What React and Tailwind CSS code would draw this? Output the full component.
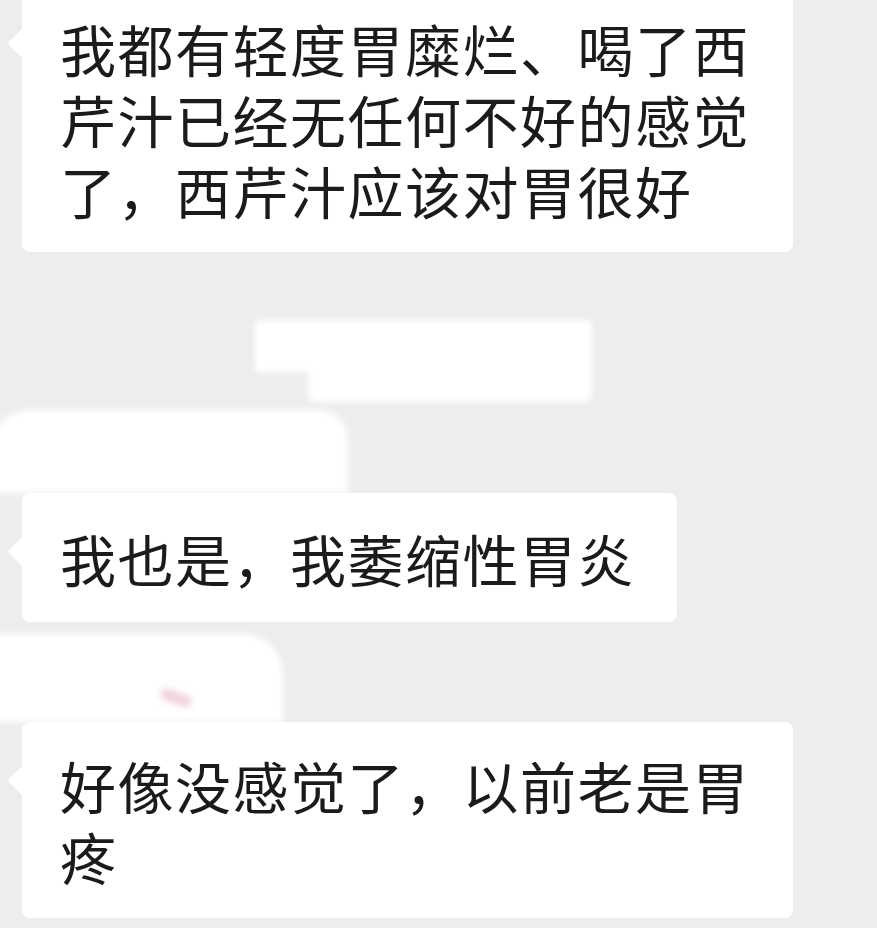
import React from 'react'

const Bubble = ({ children, className = '' }) => {
  return (
    <div className={`relative self-start ml-[22px] max-w-[771px] rounded-[8px] bg-white pl-[38px] pr-[42px] ${className}`}>
      <span className="absolute -left-[10px] top-[48px] h-[21px] w-[21px] rotate-45 rounded-[2px] bg-white"></span>
      <p className="relative text-[56px] leading-[71px] tracking-[1.5px] text-[#1b1b1b]">{children}</p>
    </div>
  )
}

// painted-over area between messages
const Redacted = () => {
  return (
    <div className="flex h-[241px] w-full flex-col pt-[68px] blur-[3px]">
      <div className="ml-[255px] h-[52px] w-[337px] rounded-t-[4px] bg-white"></div>
      <div className="ml-[308px] h-[30px] w-[284px] rounded-b-[8px] bg-white"></div>
      <div className="-ml-[10px] mt-[8px] h-[83px] w-[358px] rounded-tr-[30px] rounded-tl-[40px] bg-white"></div>
    </div>
  )
}

const Smudge = () => {
  return (
    <div className="flex h-[100px] w-full flex-col pt-[12px]">
      <div className="-ml-[10px] flex h-[88px] w-[293px] rounded-tr-[40px] bg-white pl-[170px] pt-[58px] blur-[3px]">
        <div className="h-[12px] w-[32px] rotate-[20deg] rounded-full bg-[#f1d3dd]"></div>
      </div>
    </div>
  )
}

export default function App() {
  return (
    <div
      className="flex h-[928px] w-[877px] flex-col overflow-hidden bg-[#ededed]"
      style={{ fontFamily: '"Noto Sans CJK SC", "Noto Sans", sans-serif' }}
    >
      <Bubble className="-mt-[15px] py-[27px]">
        我都有轻度胃糜烂、喝了西芹汁已经无任何不好的感觉了，西芹汁应该对胃很好
      </Bubble>
      <Redacted />
      <Bubble className="py-[29px]">我也是，我萎缩性胃炎</Bubble>
      <Smudge />
      <Bubble className="py-[27px]">好像没感觉了，以前老是胃疼</Bubble>
    </div>
  )
}
